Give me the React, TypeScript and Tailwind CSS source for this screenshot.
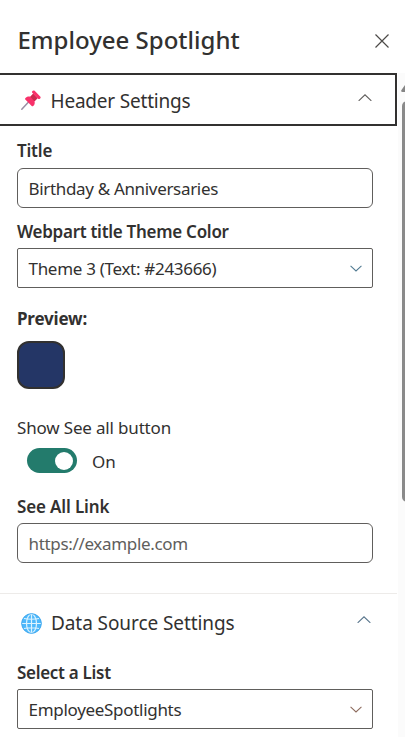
import type { ReactNode } from 'react';

function Chevron({ up = false, wide = false, color = '#605e5c' }: { up?: boolean; wide?: boolean; color?: string }) {
  return (
    <svg
      className={wide ? 'h-[7.5px] w-[14px] shrink-0' : 'h-[7px] w-3 shrink-0'}
      viewBox="0 0 15 8"
      fill="none"
      stroke={color}
      strokeWidth={wide ? 1.2 : 1.3}
    >
      <path d={up ? 'M0.7 7.3L7.5 0.9L14.3 7.3' : 'M0.7 0.7L7.5 7.1L14.3 0.7'} />
    </svg>
  );
}

function Pin() {
  return (
    <svg className="h-5 w-5 shrink-0" viewBox="0 0 20 20">
      <path d="M0.8 19.2L8 11.5" stroke="#998ea4" strokeWidth="1.5" strokeLinecap="round" />
      <path d="M4.3 8.2C5.4 6.7 7.4 6.2 9.3 6.7L12.2 3.8L16.5 8.2L13.5 11.2C14.1 13 13.6 14.9 12.1 16.1C11.6 16.5 11.1 16.4 10.7 16L4.3 9.6C3.9 9.2 3.9 8.7 4.3 8.2Z" fill="#f8316a" />
      <path d="M9.3 6.7L12.2 3.8L16.5 8.2L13.5 11.2Z" fill="#cb294e" />
      <path d="M11.2 1.2C11.8 0.4 12.8 0.1 13.6 0.8L19.2 6.4C19.9 7.1 19.7 8.2 18.9 8.8C18.3 9.2 17.6 9.2 17 8.7L11.4 3.1C10.9 2.5 10.8 1.8 11.2 1.2Z" fill="#f8316a" />
    </svg>
  );
}

function Globe() {
  return (
    <svg className="h-[21px] w-[21px] shrink-0" viewBox="0 0 21 21">
      <circle cx="10.5" cy="10.5" r="10" fill="#4db8fb" />
      <g fill="none" stroke="#dcf3ff" strokeWidth="1.2">
        <path d="M1 10.5H20M2.8 5.5Q10.5 7 18.2 5.5M2.8 15.5Q10.5 14 18.2 15.5M10.5 1V20" />
        <ellipse cx="10.5" cy="10.5" rx="5" ry="9.3" />
      </g>
      <circle cx="10.5" cy="10.5" r="9.8" fill="none" stroke="#43a9ee" strokeWidth="1" />
    </svg>
  );
}

function Label({ children, className = 'font-semibold' }: { children: ReactNode; className?: string }) {
  return <div className={`h-6 text-[17px] leading-6 whitespace-nowrap ${className}`}>{children}</div>;
}

function Field({ children, className = '' }: { children: ReactNode; className?: string }) {
  return (
    <div className={`flex h-10 w-[356px] items-center justify-between border border-[#605e5c] pr-[10px] pl-[10.5px] text-[17px] whitespace-nowrap ${className}`}>
      {children}
    </div>
  );
}

export default function App() {
  return (
    <div className="flex h-[737px] w-[405px] flex-col overflow-hidden bg-white font-['Noto_Sans',sans-serif] text-[#323130]">
      <header className="flex h-[73px] shrink-0 items-center justify-between pt-2 pr-[16px] pl-[17.5px]">
        <h1 className="-mt-0.5 text-[24px] leading-8 font-medium tracking-[0px] whitespace-nowrap">Employee Spotlight</h1>
        <svg className="h-[14px] w-[14px]" viewBox="0 0 14 14" stroke="#4c4a48" strokeWidth="1.2">
          <path d="M0.5 0.5L13.5 13.5M13.5 0.5L0.5 13.5" />
        </svg>
      </header>
      <div className="flex min-h-0 flex-1">
        <main className="flex w-[397px] shrink-0 flex-col">
          <section className="flex h-[53px] shrink-0 items-center border-y-2 border-r-2 border-[#323130] pr-[23px] pl-[21px]">
            <Pin />
            <span className="mt-[2px] ml-[9.5px] flex-1 text-[19px] leading-7 tracking-[-0.2px] whitespace-nowrap">Header Settings</span>
            <span className="-mt-1"><Chevron up wide /></span>
          </section>
          <div className="flex h-[468px] shrink-0 flex-col border-b border-[#edebe9] pl-[17px]">
            <Label className="mt-[13px] font-semibold tracking-[-0.2px]">Title</Label>
            <Field className="mt-[5px] rounded-md"><span className="mt-px tracking-[-0.33px]">Birthday &amp; Anniversaries</span></Field>
            <Label className="mt-[12px] font-semibold tracking-[-0.28px]">Webpart title Theme Color</Label>
            <Field className="mt-[4px] rounded-[2px]">
              <span className="mt-px tracking-[-0.3px]">Theme 3 (Text: #243666)</span>
              <Chevron color="#507a91" />
            </Field>
            <Label className="mt-[19px] font-bold tracking-[-0.2px]">Preview:</Label>
            <div className="mt-[10px] h-12 w-12 rounded-xl border-2 border-[#323130] bg-[#243666]" />
            <div className="mt-[27px] h-6 text-[17px] leading-6 tracking-[-0.17px] whitespace-nowrap">Show See all button</div>
            <div className="mt-[8px] flex h-[25px] items-center pl-[10px]">
              <div className="flex h-[25px] w-[50px] items-center justify-end rounded-full bg-[#237b6c] pr-[4px]">
                <div className="h-[18px] w-[18px] rounded-full bg-white" />
              </div>
              <span className="mt-[2px] ml-[15px] text-[17px]">On</span>
            </div>
            <Label className="mt-[22px] font-semibold tracking-[-0.15px]">See All Link</Label>
            <Field className="mt-[4px] rounded-md text-[#605e5c]"><span className="mt-px tracking-[-0.33px]">https://example.com</span></Field>
          </div>
          <section className="flex h-[58px] shrink-0 items-center pr-[26px] pl-[21px]">
            <Globe />
            <span className="ml-[9px] flex-1 text-[19px] leading-7 tracking-[-0.08px] whitespace-nowrap">Data Source Settings</span>
            <span className="-mt-[7px]"><Chevron up wide color="#58758c" /></span>
          </section>
          <div className="pl-[17px]">
            <Label className="mt-[9px] font-semibold tracking-[-0.3px]">Select a List</Label>
            <Field className="mt-[4px] rounded-[2px]">
              <span className="mt-px tracking-[-0.3px]">EmployeeSpotlights</span>
              <Chevron color="#8c6a5c" />
            </Field>
          </div>
        </main>
        <aside className="ml-px flex flex-1 flex-col bg-[#fbfbfb] pl-[4px]">
          <svg className="mt-[12px] -ml-px h-[7px] w-[4px]" viewBox="0 0 4 7"><path d="M4 0L0.3 5.2Q-0.2 7 1.5 7H4Z" fill="#858585" /></svg>
          <div className="mt-[9px] h-[401px] w-[9px] shrink-0 rounded-l-[5px] bg-[#8a8a8a]" />
        </aside>
      </div>
    </div>
  );
}
